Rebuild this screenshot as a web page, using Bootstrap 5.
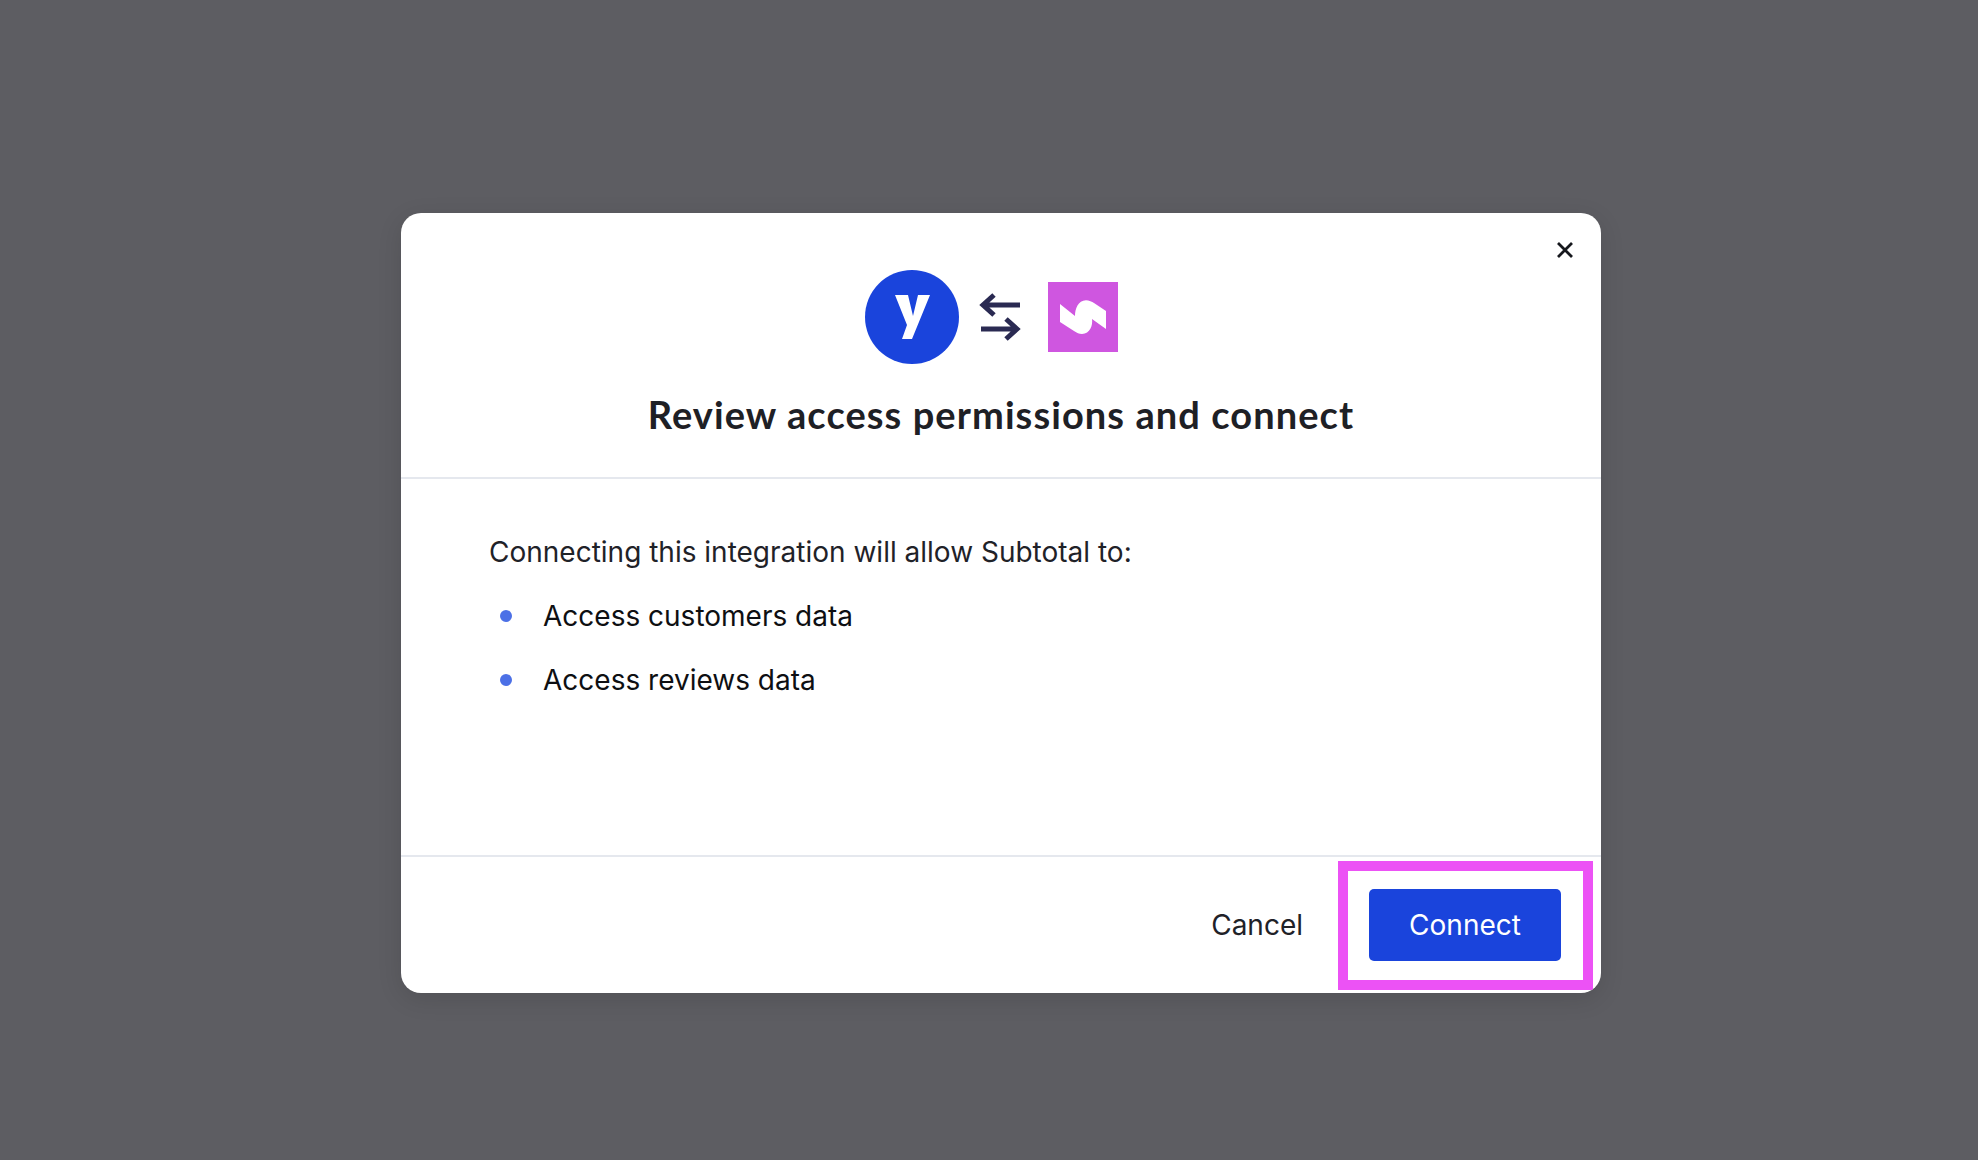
<!DOCTYPE html>
<html lang="en">
<head>
<meta charset="utf-8">
<title>Review access permissions and connect</title>
<link href="https://cdn.jsdelivr.net/npm/bootstrap@5.3.0/dist/css/bootstrap.min.css" rel="stylesheet">
<style>
html, body { height: 100%; }
body { background: #5d5d62; font-family: Inter, "Liberation Sans", sans-serif; overflow: hidden; }
.stage { height: 1160px; padding: 213px 377px 0 401px; }
.dialog-box { width: 1200px; height: 780px; border: 0; border-radius: 20px; background: #fff; box-shadow: 0 6px 24px rgba(0,0,0,.12); overflow: hidden; }
.dialog-head { height: 266px; padding: 57px 0 0; border-bottom: 2px solid #e5e8ee; border-radius: 0; display: block; flex: none; }
.logo-row { padding-right: 19px; height: 94px; }
.logo-circle { width: 94px; height: 94px; display: block; }
.logo-arrows { width: 44px; height: 50px; margin: 0 26px 0 19px; display: block; }
.logo-square { width: 70px; height: 70px; display: block; }
.dialog-title { font-family: Lato, "Liberation Sans", sans-serif; font-weight: 700; font-size: 38px; line-height: 46px; letter-spacing: 1.08px; color: #1e2025; margin: 27px 0 0; text-align: center; }
.close-x { top: 17px; right: 16px; width: 40px; height: 40px; background: none; border: 0; padding: 0; }
.close-x svg { width: 18px; height: 18px; display: block; margin: auto; }
.dialog-body { padding: 55px 88px 0; height: 376px; flex: none; }
.intro-line { font-size: 28px; line-height: 36px; color: #1f2228; margin: 0 0 28px; letter-spacing: 0; }
.perm-list { margin: 0; padding: 0; list-style: none; }
.perm-item { font-size: 28px; line-height: 36px; color: #0e0f12; margin-bottom: 28px; }
.perm-dot { width: 12px; height: 12px; border-radius: 50%; background: #4c70e6; margin: 0 31px 0 11px; flex: none; }
.dialog-foot { height: 136px; padding: 32px 40px 0 0; border-top: 2px solid #e5e8ee; border-radius: 0; display: flex; align-items: flex-start; justify-content: flex-end; flex: none; }
.cancel-btn { font-size: 28px; line-height: 36px; color: #1f2228; padding: 18px 0; margin: 0 66px 0 0; background: none; border: 0; border-radius: 0; }
.connect-btn { width: 192px; height: 72px; padding: 0; font-size: 28px; line-height: 36px; background: #1a44dc; border: 0; border-radius: 5px; color: #fff; margin: 0; }
.highlight-box { left: 937px; top: 648px; width: 255px; height: 129px; border: 10px solid #ec52f5; pointer-events: none; }
</style>
</head>
<body>
<div class="stage">
  <div class="modal-content dialog-box position-relative d-flex flex-column">
    <div class="modal-header dialog-head">
      <div class="logo-row d-flex align-items-center justify-content-center">
        <svg class="logo-circle" viewBox="0 0 94 94" aria-label="Yotpo"><circle cx="47" cy="47" r="47" fill="#1a44dc"/><path fill="#fff" d="M30 25H43L48 46 53 25H65L47 69H37L42 55Z"/></svg>
        <svg class="logo-arrows" viewBox="0 0 44 50" fill="none" stroke="#2a2a52" stroke-width="5" aria-hidden="true"><path d="M42 13H6M16 3 5 13 16 23M3 37H39M28 27 39 37 28 47"/></svg>
        <svg class="logo-square" viewBox="0 0 70 70" aria-label="Subtotal"><rect width="70" height="70" fill="#cf56e0"/><path fill="#fff" d="M12 22 27 34C27 27 30 18.5 38 18.3 41 18.3 44 20 46 21L58 29V47L44 37C45 43 42 52 34 52 31 52 29 51 26 49L12 40Z"/></svg>
      </div>
      <h1 class="dialog-title">Review access permissions and connect</h1>
    </div>
    <button type="button" class="close-x position-absolute d-flex align-items-center" aria-label="Close">
      <svg viewBox="0 0 18 18" fill="none" stroke="#16181d" stroke-width="2.8" aria-hidden="true"><path d="M2 2 16 16M16 2 2 16"/></svg>
    </button>
    <div class="modal-body dialog-body">
      <p class="intro-line">Connecting this integration will allow Subtotal to:</p>
      <ul class="perm-list">
        <li class="perm-item d-flex align-items-center"><span class="perm-dot"></span>Access customers data</li>
        <li class="perm-item d-flex align-items-center"><span class="perm-dot"></span>Access reviews data</li>
      </ul>
    </div>
    <div class="modal-footer dialog-foot">
      <button type="button" class="btn cancel-btn">Cancel</button>
      <button type="button" class="btn btn-primary connect-btn">Connect</button>
    </div>
    <div class="highlight-box position-absolute"></div>
  </div>
</div>
<script src="https://cdn.jsdelivr.net/npm/bootstrap@5.3.0/dist/js/bootstrap.bundle.min.js"></script>
</body>
</html>
